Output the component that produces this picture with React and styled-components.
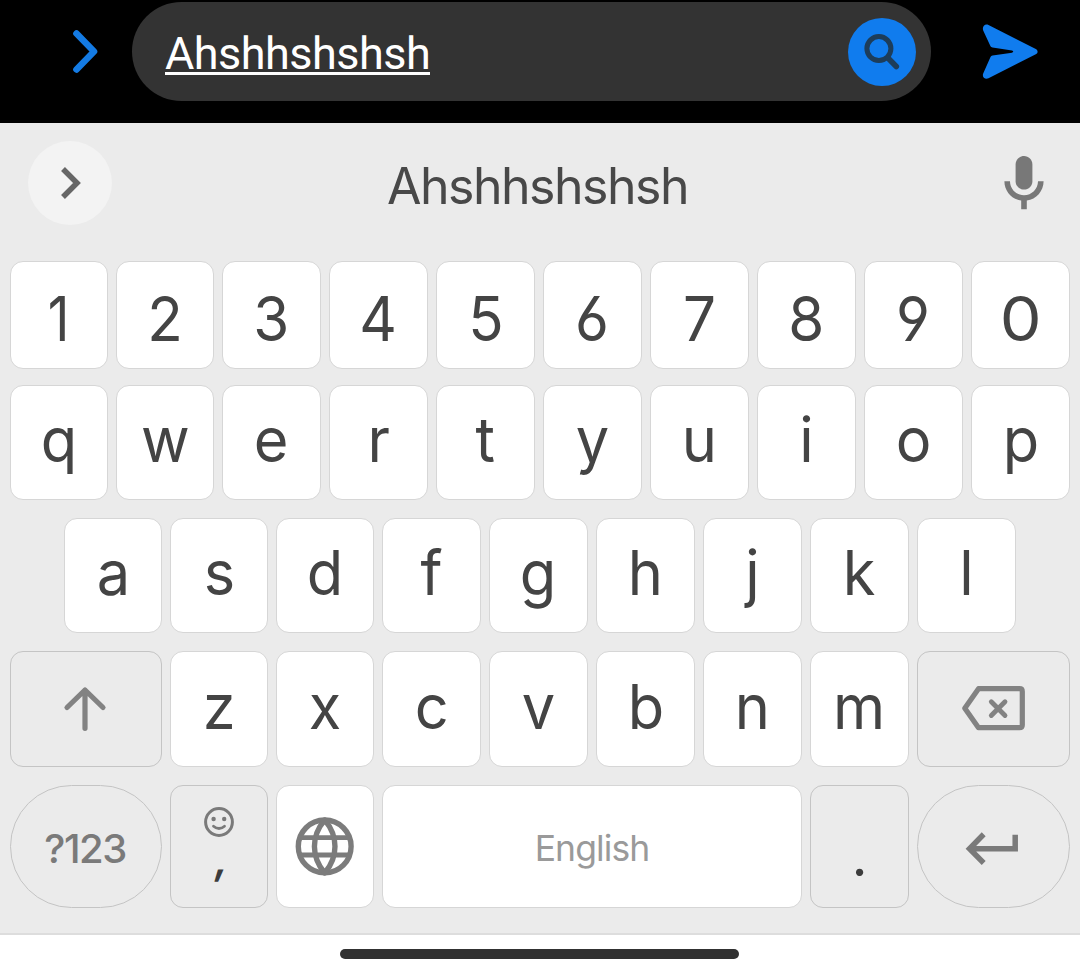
import React from "react";
import styled, { createGlobalStyle } from "styled-components";

const GlobalStyle = createGlobalStyle`
  * { box-sizing: border-box; }
  body { margin: 0; background: #fff; font-family: Inter, "Liberation Sans", sans-serif; }
  svg { display: block; flex: none; }
`;

const Screen = styled.main`
  width: 1080px;
  height: 976px;
  overflow: hidden;
  display: flex;
  flex-direction: column;
  background: #fff;
`;

const Composer = styled.header`
  height: 123px;
  flex: none;
  display: flex;
  align-items: flex-start;
  background: #000;
  padding: 2px 32px 0 62px;
`;

const ComposerIcon = styled.div`
  height: 99px;
  width: ${(p) => p.$width}px;
  display: flex;
  align-items: center;
`;

const MessageField = styled.div`
  width: 799px;
  height: 99px;
  margin-right: 44px;
  padding: 0 15px 0 33px;
  border-radius: 50px;
  background: #333;
  display: flex;
  align-items: center;
  justify-content: space-between;
`;

const Message = styled.span`
  font-family: Roboto, sans-serif;
  font-size: 45px;
  line-height: 54px;
  letter-spacing: -0.53px;
  color: #fff;
  border-bottom: 3px solid #fff;
  height: 46px;
  padding-top: 7px;
  display: flex;
  align-items: center;
`;

const SearchButton = styled.div`
  width: 68px;
  height: 68px;
  border-radius: 50%;
  background: #107cee;
  margin-top: 1px;
`;

const Keyboard = styled.section`
  flex: none;
  height: 812px;
  background: #ebebeb;
  border-bottom: 2px solid #dddddd;
`;

const SuggestionBar = styled.div`
  height: 138px;
  padding: 18px 23px 0 28px;
  display: grid;
  grid-template-columns: 84px 1fr 67px;
  align-items: start;
`;

const ExpandButton = styled.div`
  width: 84px;
  height: 84px;
  border-radius: 50%;
  background: #f3f3f3;
`;

const Suggestion = styled.span`
  font-size: 50px;
  line-height: 60px;
  letter-spacing: -1.5px;
  text-align: center;
  color: #484848;
  padding: 15px 27px 0 0;
`;

const Row = styled.div`
  display: grid;
  grid-template-columns: ${(p) => p.$columns};
  gap: 8px;
  height: ${(p) => p.$height}px;
  margin: 0 10px ${(p) => p.$after}px ${(p) => p.$indent || 10}px;
`;

const Key = styled.div`
  display: flex;
  flex-direction: column;
  align-items: center;
  justify-content: center;
  border: 1px solid ${(p) => (p.$muted ? "#c4c4c4" : "#d6d6d6")};
  border-radius: ${(p) => (p.$round ? "62px" : "13px")};
  background: ${(p) => (p.$muted ? "#ebebeb" : "#fff")};
  padding-top: ${(p) => Math.max(p.$drop || 0, 0)}px;
  padding-bottom: ${(p) => Math.max(-(p.$drop || 0), 0)}px;
`;

const Glyph = styled.span`
  font-size: 62px;
  line-height: 62px;
  color: #444;
  font-feature-settings: "cv03", "cv04";
  transform: scaleX(${(p) => p.$stretch});
`;

const ModeLabel = styled.span`
  font-size: 40px;
  line-height: 48px;
  font-weight: 500;
  letter-spacing: -1.5px;
  color: #7a7a7a;
  padding-right: 2px;
`;

const SpaceLabel = styled.span`
  font-size: 35.5px;
  line-height: 42px;
  letter-spacing: -0.9px;
  color: #9a9a9a;
`;

const Punctuation = styled.span`
  font-family: ${(p) => p.$font};
  font-size: ${(p) => p.$size}px;
  font-weight: ${(p) => p.$weight || 400};
  line-height: ${(p) => p.$line}px;
  color: #3c3c3c;
`;

const Comma = styled.span`
  display: block;
  transform: translate(3px, -5px) skewX(-8deg);
`;

const NavigationArea = styled.footer`
  flex: 1;
  display: flex;
  justify-content: center;
  padding-top: 14px;
  padding-right: 1px;
`;

const HomeBar = styled.div`
  width: 399px;
  height: 10px;
  border-radius: 5px;
  background: #313131;
`;

const ROWS = [
  { keys: "1234567890", columns: "98px 98px repeat(8, 99px)", height: 108, after: 16, drop: 7 },
  { keys: "qwertyuiop", columns: "98px 98px repeat(8, 99px)", height: 115, after: 18, drop: -6 },
  { keys: "asdfghjkl", columns: "repeat(3, 98px) repeat(6, 99px)", height: 115, after: 18, drop: -6, indent: 64 },
];

const stretchOf = (k) => {
  if (k === "0") return 1.07;
  if (k === "1") return 0.86;
  return /[2-9]/.test(k) ? 0.94 : 0.96;
};

function LetterKeys({ keys, drop }) {
  return [...keys].map((k) => (
    <Key key={k} $drop={drop}>
      <Glyph $stretch={stretchOf(k)}>{k}</Glyph>
    </Key>
  ));
}

const stroke = (color, width, cap = "round") => ({
  fill: "none",
  stroke: color,
  strokeWidth: width,
  strokeLinecap: cap,
  strokeLinejoin: cap === "round" ? "round" : "miter",
});

export default function App() {
  return (
    <>
      <GlobalStyle />
      <Screen>
        <Composer>
          <ComposerIcon $width={70}>
            <svg width="40" height="51" viewBox="62 26 40 51">
              <path d="M76.5 33.5L94 51.5L76.5 69.5" {...stroke("#147be4", 6.6)} />
            </svg>
          </ComposerIcon>
          <MessageField>
            <Message>Ahshhshshsh</Message>
            <SearchButton>
              <svg width="68" height="68" viewBox="848 18 68 68">
                <circle cx="878.9" cy="48.6" r="12" {...stroke("#1d3d5a", 5)} />
                <path d="M888 58L896.3 66.5" {...stroke("#1d3d5a", 5.6)} />
              </svg>
            </SearchButton>
          </MessageField>
          <ComposerIcon $width={70}>
            <svg width="70" height="61" viewBox="975 21.5 70 61">
              <path
                fill="#107cee"
                d="M983.2 31C981.8 27 985 23.8 988.5 25.6L1035.8 49.6C1038.2 51 1038.2 53.4 1035.8 54.8L988.5 78.8C985 80.5 981.8 77.5 983.2 74L990.5 57.5Q991 56.2 992.5 56.1L1012 53.2Q1014.5 52 1012 51L992.5 48Q991 47.8 990.5 46.7Z"
              />
            </svg>
          </ComposerIcon>
        </Composer>

        <Keyboard>
          <SuggestionBar>
            <ExpandButton>
              <svg width="84" height="84" viewBox="28 141 84 84">
                <path d="M63 169L77 183L63 197" {...stroke("#666", 5.5, "butt")} />
              </svg>
            </ExpandButton>
            <Suggestion>Ahshhshshsh</Suggestion>
            <svg width="67" height="84" viewBox="990 141 67 84">
              <g transform="translate(990.4 150.4) scale(2.8)" fill="#787878">
                <path d="M12 14c1.66 0 3-1.34 3-3V5c0-1.66-1.34-3-3-3S9 3.34 9 5v6c0 1.66 1.34 3 3 3z" />
                <path d="M17 11c0 2.76-2.24 5-5 5s-5-2.24-5-5H5c0 3.53 2.61 6.43 6 6.92V21h2v-3.08c3.39-.49 6-3.39 6-6.92h-2z" />
              </g>
            </svg>
          </SuggestionBar>

          {ROWS.map((r) => (
            <Row key={r.keys} $columns={r.columns} $height={r.height} $after={r.after} $indent={r.indent}>
              <LetterKeys keys={r.keys} drop={r.drop} />
            </Row>
          ))}

          <Row $columns="152px 98px 98px repeat(5, 99px) 153px" $height={116} $after={18}>
            <Key $muted>
              <svg width="60" height="60" viewBox="56 679 60 60">
                <path d="M67 707.5L85 690L103 707.5M85 690V728.3" {...stroke("#828282", 5.2)} />
              </svg>
            </Key>
            <LetterKeys keys="zxcvbnm" drop={-5} />
            <Key $muted>
              <svg width="81" height="60" viewBox="953 679 81 60">
                <path
                  d="M978.5 688.7H1019.5Q1022.3 688.7 1022.3 691.5V725Q1022.3 727.7 1019.5 727.7H978.5L964.8 708.2Z"
                  {...stroke("#828282", 5.2)}
                />
                <path d="M991.3 701.8L1005 715.5M1005 701.8L991.3 715.5" {...stroke("#828282", 4.8)} />
              </svg>
            </Key>
          </Row>

          <Row $columns="152px 98px 98px 420px 99px 153px" $height={123} $after={0}>
            <Key $muted $round $drop={4}>
              <ModeLabel>?123</ModeLabel>
            </Key>
            <Key $muted>
              <svg width="40" height="34" viewBox="199 805 40 34">
                <circle cx="219" cy="822" r="13.4" {...stroke("#7a7a7a", 3)} />
                <circle cx="213.6" cy="819" r="2.2" fill="#7a7a7a" />
                <circle cx="224.2" cy="819" r="2.2" fill="#7a7a7a" />
                <path d="M213.5 826.2Q219 830.8 224.5 826.2" {...stroke("#7a7a7a", 2.8)} />
              </svg>
              <Punctuation $font="Inter, sans-serif" $size={42} $weight={600} $line={50}>
                <Comma>,</Comma>
              </Punctuation>
            </Key>
            <Key>
              <svg width="64" height="64" viewBox="293 815 64 64">
                <g {...stroke("#7c7c7c", 5.4, "butt")}>
                  <circle cx="324.7" cy="846.4" r="26.4" />
                  <path d="M301 837.7H348.5M301 855H348.5" strokeWidth="4.8" />
                  <path d="M324.7 820C311 836 311 857 324.7 873C338.4 857 338.4 836 324.7 820Z" strokeLinejoin="round" />
                </g>
              </svg>
            </Key>
            <Key $drop={5}>
              <SpaceLabel>English</SpaceLabel>
            </Key>
            <Key $muted $drop={14}>
              <Punctuation $font="Lato, sans-serif" $size={58} $line={50}>.</Punctuation>
            </Key>
            <Key $muted $round>
              <svg width="61" height="50" viewBox="963 822 61 50">
                <path d="M983.7 834.3L969.5 848.7L983.7 863M969.5 848.7H1015.2V834.8" {...stroke("#7a7a7a", 5.5, "butt")} />
              </svg>
            </Key>
          </Row>
        </Keyboard>

        <NavigationArea>
          <HomeBar />
        </NavigationArea>
      </Screen>
    </>
  );
}
